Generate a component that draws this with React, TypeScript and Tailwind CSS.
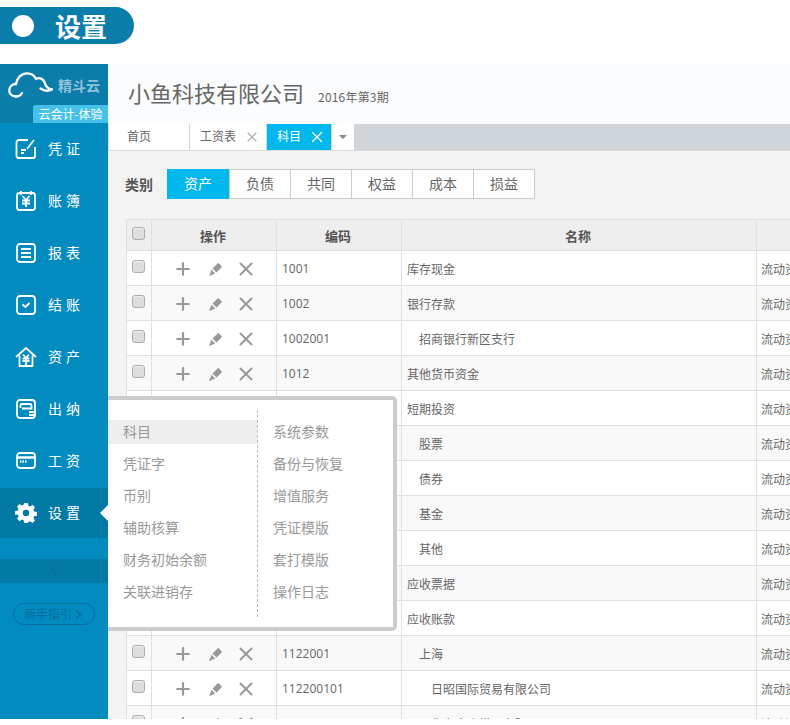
import { Plus, X, ChevronLeft, ChevronRight } from "lucide-react";

const font = "font-['Noto_Sans_CJK_SC','Liberation_Sans',sans-serif]";

const navItems = [
  { label: "凭证", icon: "voucher" },
  { label: "账簿", icon: "book" },
  { label: "报表", icon: "report" },
  { label: "结账", icon: "close" },
  { label: "资产", icon: "asset" },
  { label: "出纳", icon: "cashier" },
  { label: "工资", icon: "wage" },
];

const rows = [
  { code: "1001", name: "库存现金", indent: 0 },
  { code: "1002", name: "银行存款", indent: 0 },
  { code: "1002001", name: "招商银行新区支行", indent: 12 },
  { code: "1012", name: "其他货币资金", indent: 0 },
  { code: "1101", name: "短期投资", indent: 0 },
  { code: "1101001", name: "股票", indent: 12 },
  { code: "1101002", name: "债券", indent: 12 },
  { code: "1101003", name: "基金", indent: 12 },
  { code: "1101004", name: "其他", indent: 12 },
  { code: "1121", name: "应收票据", indent: 0 },
  { code: "1122", name: "应收账款", indent: 0 },
  { code: "1122001", name: "上海", indent: 12 },
  { code: "112200101", name: "日昭国际贸易有限公司", indent: 24 },
  { code: "112200102", name: "华东中小模具有限公司", indent: 24 },
];

const menuLeft = ["科目", "凭证字", "币别", "辅助核算", "财务初始余额", "关联进销存"];
const menuRight = ["系统参数", "备份与恢复", "增值服务", "凭证模版", "套打模版", "操作日志"];
const categories = ["资产", "负债", "共同", "权益", "成本", "损益"];

function NavIcon({ name }: { name: string }) {
  const common = {
    width: 22,
    height: 22,
    viewBox: "0 0 22 22",
    fill: "none",
    stroke: "white",
    strokeWidth: 1.8,
  };
  switch (name) {
    case "voucher":
      return (
        <svg {...common}>
          <path d="M13 2H4a2.500 2.500 0 0 0-2.500 2.500v13A2.500 2.500 0 0 0 4 20h14a2 2 0 0 0 2-2V9" />
          <path d="M6 12h5M6 15h3M12 11l7-9" />
        </svg>
      );
    case "book":
      return (
        <svg {...common}>
          <rect x="2" y="3" width="18" height="17" rx="2.500" />
          <path d="M6 1v4M16 1v4M7.500 6l3.500 4 3.500-4M7 10.500h8M7 13.500h8M11 10v7" />
        </svg>
      );
    case "report":
      return (
        <svg {...common}>
          <rect x="2" y="2" width="18" height="18" rx="3" />
          <path d="M6 7h10M6 11h10M6 15h10" />
        </svg>
      );
    case "close":
      return (
        <svg {...common}>
          <rect x="2" y="2" width="18" height="18" rx="3" />
          <path d="M7.500 10.500l3 2.500 4-4" />
        </svg>
      );
    case "asset":
      return (
        <svg {...common}>
          <path d="M1 11L11 2l10 9M4.500 9.500V20h13V9.500" />
          <path d="M8 8.500l3 3.500 3-3.500M7.500 12.500h7M7.500 15h7M11 12v7" />
        </svg>
      );
    case "cashier":
      return (
        <svg {...common}>
          <rect x="2" y="2" width="18" height="18" rx="3" />
          <path d="M5.500 10V7.500a1.500 1.500 0 0 1 1.500-1.500h8a1.500 1.500 0 0 1 1.500 1.500V10.500H7M14 14h6M14 17h6" />
        </svg>
      );
    case "wage":
      return (
        <svg {...common} height="20" viewBox="0 0 22 20">
          <rect x="2" y="2" width="18" height="15" rx="3" />
          <path d="M2 6.500h18" strokeWidth="2.500" />
          <path d="M5 10.500h7" strokeWidth="2.500" strokeDasharray="1.500 1" />
        </svg>
      );
    default:
      return null;
  }
}

function GearIcon() {
  return (
    <svg width="22" height="22" viewBox="0 0 24 24" fill="white">
      <path d="M10 1h4l.6 3.100 1.900.8 2.600-1.800 2.800 2.800-1.800 2.600.8 1.900 3.100.6v4l-3.100.6-.8 1.900 1.800 2.600-2.800 2.800-2.600-1.800-1.900.8L14 23h-4l-.6-3.100-1.900-.8-2.600 1.800-2.800-2.800 1.800-2.600-.8-1.900L0 14v-4l3.100-.6.800-1.900-1.800-2.600 2.800-2.800 2.600 1.800 1.900-.8zM12 8.500a3.500 3.500 0 1 0 0 7 3.500 3.500 0 0 0 0-7z" fillRule="evenodd" />
    </svg>
  );
}

function PencilIcon() {
  return (
    <svg width="13" height="13" viewBox="0 0 13 13" fill="#999999">
      <path d="M3.500 5.500L8.500.5c.4-.4 1-.4 1.400 0l2.600 2.600c.4.4.4 1 0 1.400L7.500 9.500z" />
      <path d="M2.500 6.800L6.200 10.500 0.500 13l-.3-.3z" />
    </svg>
  );
}

function Check() {
  return (
    <input
      type="checkbox"
      readOnly
      className="block w-[13px] h-[13px] appearance-none rounded-[3px] border border-[#adadad] bg-[#dddddd] shadow-[inset_0_1px_1px_#f2f2f2]"
    />
  );
}

export default function App() {
  return (
    <div className={`w-[790px] h-[725px] overflow-hidden bg-white ${font}`}>
      {/* 标题 */}
      <div className="h-[64px] pt-[7px]">
        <div className="flex items-center w-[134px] h-[37px] bg-[#0a7dab] rounded-r-[19px]">
          <span className="w-[22px] h-[22px] ml-3 rounded-full bg-white" />
          <span className="ml-[21px] text-[26px] leading-none font-bold text-white">设置</span>
        </div>
      </div>

      <div className="relative flex h-[655px] overflow-hidden">
        {/* 侧边栏 */}
        <aside className="w-[108px] shrink-0 bg-[#028bbf] flex flex-col">
          <div className="relative h-[59px] shrink-0 bg-[#0a7dab]">
            <div className="flex items-start pt-[8px] pl-[8px]">
              <svg width="45" height="26" viewBox="0 0 45 26" fill="none" stroke="white" strokeWidth="2.300" strokeLinecap="round">
                <path d="M8 24.500C3.500 24.500 1 21.500 1.300 18c.3-3.500 3-6 6.700-6C8.800 6 13.500 1.300 19 1.300c4.200 0 7.500 2.300 9 5.500 3.500-1.500 7.500 0 8.500 3.500.8 3.300 3 6.500 7.500 7.200-3.500 1.700-8 1.500-11.500-1" />
                <path d="M8 24.500c3 0 5-1.500 6-3.500" />
              </svg>
              <span className="ml-[5px] mt-[6px] text-[14px] leading-none font-bold text-[#93c3d8] whitespace-nowrap">精斗云</span>
            </div>
            <div className="absolute right-0 bottom-0 w-[75px] h-[18px] bg-[#45c1ec] rounded-tl-[3px] text-white text-[12px] leading-[18px] text-center whitespace-nowrap">
              云会计-体验
            </div>
          </div>

          <nav className="shrink-0">
            {navItems.map((item) => (
              <div key={item.label} className="flex items-center h-[52px] pl-[15px]">
                <span className="w-[22px] flex justify-center -mt-[1px]">
                  <NavIcon name={item.icon} />
                </span>
                <span className="ml-[11px] -mt-[2px] text-[14px] tracking-[4px] text-white whitespace-nowrap">{item.label}</span>
              </div>
            ))}
            <div className="relative flex items-center h-[50px] mt-[1px] pl-[15px] bg-[#0379a6]">
              <GearIcon />
              <span className="ml-[11px] -mt-[2px] text-[14px] tracking-[4px] text-white whitespace-nowrap">设置</span>
              <span className="absolute right-0 top-[17px] border-y-[8px] border-r-[8px] border-y-transparent border-r-white" />
            </div>
          </nav>

          <div className="mt-[21px] h-[24px] shrink-0 bg-[#0379a6] flex items-center justify-center">
            <ChevronLeft size={18} strokeWidth={2} className="text-[#0a6d9e]" />
          </div>

          <div className="mt-[20px] ml-[13px] w-[82px] h-[22px] shrink-0 rounded-full border border-[#0a6d9e] flex items-center pl-[10px] text-[12px] text-[#0a6d9e] whitespace-nowrap">
            新手指引
            <ChevronRight size={15} strokeWidth={2.500} className="-ml-[1px]" />
          </div>
        </aside>

        {/* 主区域 */}
        <main className="flex-1 min-w-0 bg-[#f3f3f3] flex flex-col">
          <div className="h-[60px] shrink-0 bg-[#fbfcfe] flex items-center pl-[20px] pb-[4px]">
            <h1 className="text-[22px] leading-none font-normal text-[#666666] whitespace-nowrap">小鱼科技有限公司</h1>
            <span className="ml-[14px] mt-[9px] text-[12px] tracking-[0.2px] text-[#666666] whitespace-nowrap">2016年第3期</span>
          </div>

          <div className="h-[27px] shrink-0 bg-[#d0d5d9] border-b border-[#dcdcdc] flex text-[12px] text-[#666666]">
            <div className="w-[81px] bg-white border-l border-[#dddddd] pl-[18px] leading-[23px]">首页</div>
            <div className="w-[76px] ml-[1px] bg-white pl-[10px] pb-[2px] flex items-center">
              工资表
              <X size={16} strokeWidth={1.600} className="ml-[8px] mt-[2px] text-[#aaaaaa]" />
            </div>
            <div className="w-[64px] ml-[1px] bg-[#00b7ee] text-white pl-[10px] pb-[2px] flex items-center">
              科目
              <X size={18} strokeWidth={1.800} className="ml-[7px] mt-[2px]" />
            </div>
            <div className="w-[22px] ml-[1px] bg-white flex items-center justify-center">
              <span className="border-x-[4px] border-t-[4px] border-x-transparent border-t-[#888888]" />
            </div>
          </div>

          <div className="flex items-center h-[30px] shrink-0 mt-[18px] ml-[17px]">
            <span className="w-[42px] text-[14px] font-bold text-[#555555]">类别</span>
            <div className="flex h-[30px] border border-[#cccccc] bg-white text-[14px] text-[#666666]">
              {categories.map((c, i) => (
                <div
                  key={c}
                  className={
                    i === 0
                      ? "w-[62px] -my-[1px] -ml-[1px] pb-[2px] bg-[#00b7ee] text-white flex items-center justify-center"
                      : "w-[61px] pb-[2px] border-l border-[#cccccc] flex items-center justify-center"
                  }
                >
                  {c}
                </div>
              ))}
            </div>
          </div>

          <div className="mt-[20px] ml-[18px] w-[800px] shrink-0">
            <table className="table-fixed w-[800px] border-collapse text-[12px] text-[#666666]">
              <colgroup>
                <col className="w-[25px]" />
                <col className="w-[125px]" />
                <col className="w-[125px]" />
                <col className="w-[355px]" />
                <col />
              </colgroup>
              <thead>
                <tr className="h-[31px] bg-[#eeeeee] text-[13px] font-bold text-[#555555]">
                  <th className="border border-[#e0e0e0] px-[5px] pb-[3px]"><Check /></th>
                  <th className="border border-[#e0e0e0] pt-[1px] pr-[2px]">操作</th>
                  <th className="border border-[#e0e0e0] pt-[1px] pr-[2px]">编码</th>
                  <th className="border border-[#e0e0e0] pt-[1px] pr-[2px]">名称</th>
                  <th className="border border-[#e0e0e0]" />
                </tr>
              </thead>
              <tbody>
                {rows.map((r, i) => (
                  <tr key={r.code} className={`h-[35px] ${i % 2 === 0 ? "bg-white" : "bg-[#f9f9f9]"}`}>
                    <td className="border border-[#e0e0e0] px-[5px] pb-[4px]"><Check /></td>
                    <td className="border border-[#e0e0e0]">
                      <div className="flex items-center pl-[15px] pt-[2px] text-[#999999]">
                        <span className="w-[32px] flex justify-center"><Plus size={20} strokeWidth={2.600} /></span>
                        <span className="w-[32px] flex justify-center"><PencilIcon /></span>
                        <span className="w-[32px] pr-[2px] flex justify-center"><X size={22} strokeWidth={2.200} /></span>
                      </div>
                    </td>
                    <td className="border border-[#e0e0e0] pl-[5px] pt-[1px] font-['Open_Sans',sans-serif] text-[12px]">{r.code}</td>
                    <td className="border border-[#e0e0e0] pl-[5px] pt-[2px] whitespace-nowrap">
                      <span style={{ marginLeft: r.indent }}>{r.name}</span>
                    </td>
                    <td className="border border-[#e0e0e0] pl-[4px] pt-[2px] whitespace-nowrap">流动资产</td>
                  </tr>
                ))}
              </tbody>
            </table>
          </div>
        </main>

        {/* 设置弹出菜单 */}
        <div className="absolute left-[108px] top-[332px] w-[289px] h-[235px] bg-white border-y-[4px] border-r-[4px] border-[#cccccc] rounded-r-[5px] flex text-[14px] text-[#999999]">
          <div className="w-[150px] h-[207px] mt-[10px] pt-[6px] border-r border-dashed border-[#bbbbbb]">
            {menuLeft.map((m, i) => (
              <div key={m} className="h-[32px] flex items-center">
                <div className={`w-full h-[24px] pl-[15px] leading-[22px] whitespace-nowrap ${i === 0 ? "bg-[#eeeeee]" : ""}`}>{m}</div>
              </div>
            ))}
          </div>
          <div className="pt-[16px] pl-[15px]">
            {menuRight.map((m) => (
              <div key={m} className="h-[32px] leading-[30px] whitespace-nowrap">{m}</div>
            ))}
          </div>
        </div>
      </div>
    </div>
  );
}
